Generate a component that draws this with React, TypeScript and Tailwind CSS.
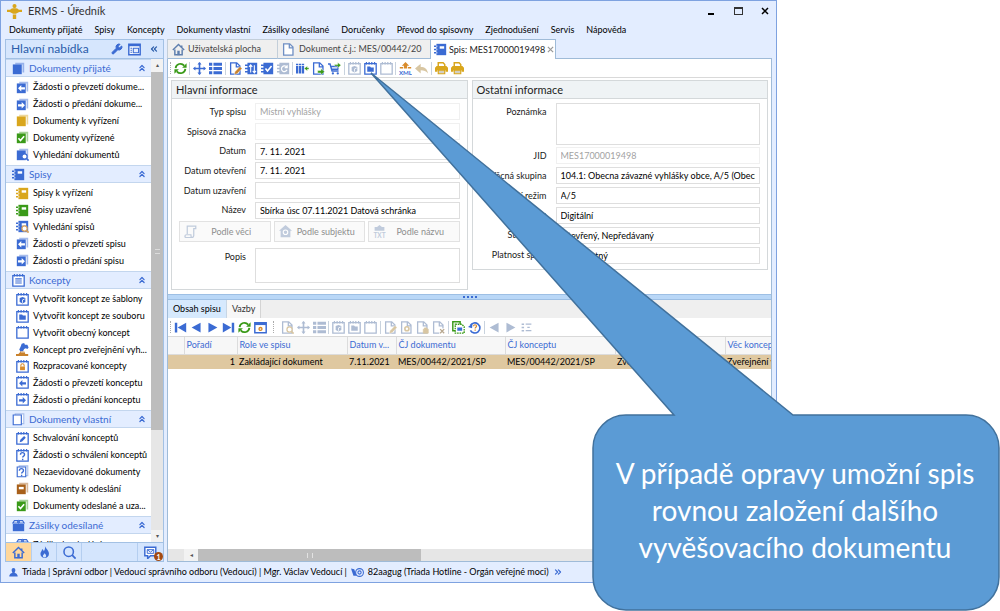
import React from 'react';
import { ChevronsLeft, ChevronsRight, ChevronsUp, Wrench } from 'lucide-react';

const BLUE = '#3b6bd3';
const LIGHT = '#a9c0ec';
const YELLOW = '#d9a61c';
const GREEN = '#3a9a18';
const BROWN = '#a8601a';
const MUTED = '#aebcd3';

type IconProps = { name: string; color?: string; size?: string };

// Sheet with a second one behind it
const stack = (c: string) => (
    <>
        <path d="M4 1h11v12h-2V3H4z" fill={c} opacity={0.45} />
        <path d="M1 3h11v12H1z" fill={c} />
    </>
);

const binder = (c: string) => (
    <>
        <path d="M3 1h12v14H3z" fill={c} />
        <path d="M0 3h4v2H0zM0 7h4v2H0zM0 11h4v2H0z" fill={c} />
        <path d="M3 3h1v2H3zM3 7h1v2H3zM3 11h1v2H3z" fill="#fff" />
        <path d="M7 4h5.500v3H7z" fill="#fff" />
    </>
);

const pad = (c: string) => (
    <>
        <path d="M1 2h14v13H1z" fill="#fff" stroke={c} strokeWidth={1.6} />
        <path d="M3 0v3M6.3 0v3M9.6 0v3M13 0v3" stroke={c} strokeWidth={1.5} />
    </>
);

const page = (c: string) => <path d="M2 1h7.500l4 4v10H2zM9 1.500V6h4.500" fill="#fff" stroke={c} strokeWidth={1.6} />;

const glass = (c: string) => (
    <>
        <circle cx={10.5} cy={10.5} r={3.2} fill="#fff" stroke={c} strokeWidth={1.5} />
        <path d="M13 13l2.5 2.5" stroke={c} strokeWidth={2} />
    </>
);

const left = (c: string) => <path d="M2.5 9l4-4v2.6H11v2.8H6.500V13z" fill={c} />;
const right = (c: string) => <path d="M11 9L7 5v2.600H2.500v2.800H7V13z" fill={c} />;
const question = (c: string) => (
    <path d="M5.500 7c0-3.300 5-3.300 5 0 0 1.800-2.300 1.700-2.300 3.500M8.200 12v1.700" fill="none" stroke={c} strokeWidth={1.7} />
);
const pencil = (c: string) => <path d="M6.500 15.500l.8-3.500L13.500 5.500l2.500 2.500-6 6.500z" fill={c} stroke="#fff" strokeWidth={0.5} />;
const spine = (c: string) => <path d="M3 1h12v14H3zM0 3h4v2H0zM0 7h4v2H0zM0 11h4v2H0z" fill={c} />;

function drawing(name: string, c: string): React.ReactNode {
    switch (name) {
        case 'docs-plain': return stack(c);
        case 'docs-left': return <>{stack(c)}{left('#fff')}</>;
        case 'docs-right': return <>{stack(c)}{right('#fff')}</>;
        case 'docs-check': return <>{stack(c)}<path d="M3 9l2.500 2.800L10 6.500" fill="none" stroke="#fff" strokeWidth={2} /></>;
        case 'docs-label': return <>{stack(c)}<path d="M3.500 6h6v3h-6z" fill="#fff" /></>;
        case 'docs-search': return <>{stack(c)}{glass(c)}</>;
        case 'docs-outline': return (
            <g fill="#fff" stroke={c} strokeWidth={1.4}>
                <path d="M4 1h10.500v12H4z" stroke={LIGHT} />
                <path d="M1.500 2.500h10v12h-10z" />
            </g>
        );
        case 'docs-question': return (
            <>
                <path d="M4 1h10.500v12H4z" fill="#fff" stroke={LIGHT} strokeWidth={1.4} />
                <path d="M1.500 2.500h10.500v12H1.500z" fill="#fff" stroke={c} strokeWidth={1.4} />
                <g transform="translate(-1.300 0)">{question(c)}</g>
            </>
        );
        case 'binder': return binder(c);
        case 'binder-search': return <>{binder(c)}{glass('#d9a35c')}</>;
        case 'binder-arrows': return <>{spine(c)}<path d="M7 13V4M5 6l2-2.500L9 6M11.500 4v9M9.500 11l2 2.500 2-2.500" fill="none" stroke="#fff" strokeWidth={1.3} /></>;
        case 'binder-check': return <>{spine(c)}<path d="M5.500 8l2.500 3 5-6" fill="none" stroke="#fff" strokeWidth={2} /></>;
        case 'binder-refresh': return <>{spine(c)}<path d="M12 6.500a3.500 3.500 0 1 0 .3 3M12.500 4v3h-3" fill="none" stroke="#fff" strokeWidth={1.5} /></>;
        case 'pad': return pad(c);
        case 'pad-lines': return <>{pad(c)}<path d="M4 6h8M4 8.500h8M4 11h8" stroke={c} strokeWidth={1.3} /></>;
        case 'pad-cube': return <>{pad(c)}<path d="M4.500 6L8 5l3.500 1v5L8 13l-3.500-2z" fill={c} /><path d="M8 12V8.500l2.500-1" fill="none" stroke="#fff" strokeWidth={1} /></>;
        case 'pad-folder': return <>{pad(c)}<path d="M4 5.500h3.500l1 1.200H12V12H4z" fill={c} /></>;
        case 'pad-lock': return <>{pad(c)}<path d="M5 8h6v4.500H5z" fill="#d98b2b" /><path d="M6 8V6.500a2 2 0 0 1 4 0V8" fill="none" stroke="#d98b2b" strokeWidth={1.3} /></>;
        case 'pad-left': return <>{pad(c)}<g transform="translate(1.300 0)">{left(c)}</g></>;
        case 'pad-right': return <>{pad(c)}<g transform="translate(1.300 0)">{right(c)}</g></>;
        case 'pad-pencil': return <>{pad(c)}<path d="M4.500 12.500l.8-3L10 5l2 2-4.500 4.700z" fill={c} /></>;
        case 'pad-question': return <>{pad(c)}{question(c)}</>;
        case 'stamp': return (
            <>
                <path d="M4 8l1.500-3L7 1l3-1 1 2 3 0 1.500 3.500-1.500 2-2-1-2 1-2 4H6z" fill={c} />
                <path d="M0 16v-2.500h3L6 10h4l1.500 3.500H15V16z" fill="#c9822d" />
                <path d="M6 11h4" stroke="#fff" />
            </>
        );
        case 'box': return (
            <>
                <path d="M1 6h14v9H1z" fill={c} />
                <path d="M3 2h4v3H1zM9 2h4l2 3H9z" fill="#fff" stroke={c} strokeWidth={1.3} />
                <path d="M8 1v5" stroke={c} />
            </>
        );
        case 'refresh': return (
            <>
                <path d="M2 7.500A5.900 5.900 0 0 1 12.500 4.500M14 8.500A5.900 5.900 0 0 1 3.500 11.500" fill="none" stroke={c} strokeWidth={2.2} />
                <path d="M15.500 1.500V7H10zM.5 14.500V9H6z" fill={c} />
            </>
        );
        case 'move': return <><path d="M8 1v14M1 8h14" stroke={c} strokeWidth={2} /><path d="M8 0l2.500 3h-5zM8 16l2.500-3h-5zM0 8l3-2.500v5zM16 8l-3-2.500v5z" fill={c} /></>;
        case 'list': return <path d="M0 1h4v3.500H0zM0 6.200h4v3.500H0zM0 11.500h4V15H0zM5.500 1H16v3.500H5.500zM5.500 6.200H16v3.500H5.500zM5.500 11.500H16V15H5.500z" fill={c} />;
        case 'small-list': return <path d="M2 3h3v2H2zM2 7h3v2H2zM2 11h3v2H2zM7 3h7v1.500H7zM9 7h3v1.500H9zM7 11h7v1.500H7z" fill={c} />;
        case 'page': return page(c);
        case 'page-pencil': return <>{page(c)}{pencil(c === MUTED ? '#d8c6a2' : '#c9822d')}</>;
        case 'page-arrow': return <>{page(c)}<path d="M7 10.500h4V8l4.500 4-4.500 4v-2.500H7z" fill={GREEN} stroke="#fff" strokeWidth={0.5} /></>;
        case 'page-search': return <>{page(c)}{glass('#d8c6a2')}</>;
        case 'page-gear': return <>{page(c)}<circle cx={8.500} cy={9.500} r={2.500} fill="none" stroke="#d8c6a2" strokeWidth={2} /></>;
        case 'page-lock': return <>{page(c)}<path d="M9 10h6v5H9zM10.500 10V8.500h3V10" fill="#d8c6a2" stroke="#d8c6a2" /></>;
        case 'page-x': return <>{page(c)}<path d="M9 9h7v7H9z" fill="#fff" /><path d="M10 10l5 5M15 10l-5 5" stroke="#b8a890" strokeWidth={1.6} /></>;
        case 'columns': return <><path d="M0 5h2.800v9H0zM3.600 5h2.800v9H3.600zM7.200 5H10v9H7.200zM0 2h2.800v2H0zM3.600 2h2.800v2H3.600zM7.200 2H10v2H7.200z" fill={c} /><path d="M16 7h-2V5l-4 3 4 3V9h2z" fill={GREEN} stroke="#fff" strokeWidth={0.5} /></>;
        case 'cart': return (
            <>
                <path d="M0 2.500h2.500L5 11h8M4 5.500h8.500L12 9H5" fill="none" stroke={c} strokeWidth={1.8} />
                <circle cx={6} cy={14} r={1.4} fill={c} /><circle cx={12} cy={14} r={1.4} fill={c} />
                <path d="M8 3h4V.5l4 3.500-4 3.500V5H8z" fill={GREEN} stroke="#fff" strokeWidth={0.5} />
            </>
        );
        case 'xml': return (
            <>
                <path d="M8 0l4.500 4.500H10V8H6V4.500H3.500zM1 6h4v2H1zM11 6h4v2h-4z" fill="#d98b2b" />
                <text x={8} y={15.500} textAnchor="middle" fontSize={7.500} fontWeight={700} fill={c}>XML</text>
            </>
        );
        case 'txt': return (
            <>
                <path d="M8 0l3 2.500h3V7H2V2.500h3zM4 4v2M8 4v2M12 4v2" fill={c} />
                <text x={8} y={15.500} textAnchor="middle" fontSize={8} fontWeight={700} fill={c}>TXT</text>
            </>
        );
        case 'back': return <path d="M0 8l7-6v4c5 0 8 2 9 8-2-3-5-4-9-4v4z" fill={c} />;
        case 'printer': return (
            <>
                <path d="M4 5V1h6l2 2v2" fill="#fff" stroke={c} strokeWidth={1.8} />
                <path d="M2 5h12l2 2v5h-3v-2H3v2H0V7z" fill={c} />
                <path d="M4 10h8v4.500H4z" fill="#d3cfc4" stroke={c} strokeWidth={1.4} />
            </>
        );
        case 'first': return <path d="M1 2h3v12H1zM15 2v12L4.500 8z" fill={c} />;
        case 'prev': return <path d="M13 2v12L2 8z" fill={c} />;
        case 'next': return <path d="M3 2v12l11-6z" fill={c} />;
        case 'last': return <path d="M12 2h3v12h-3zM1 2v12l10.500-6z" fill={c} />;
        case 'window-gear': return <><path d="M1 2h14v12.500H1z" fill="#fff" stroke={c} strokeWidth={1.8} /><path d="M1 2h14v3H1z" fill={c} /><circle cx={8} cy={9.800} r={1.8} fill="none" stroke="#d98b2b" strokeWidth={1.7} /></>;
        case 'copy-green': return <><path d="M1 1h9v11H1z" fill="#fff" stroke={c} strokeWidth={1.8} /><path d="M4 4h8l3 3v8H4z" fill="#fff" stroke={c} strokeWidth={1.6} strokeDasharray="2 1" /><path d="M6.500 8h6v4h-6z" fill={BLUE} /></>;
        case 'help-round': return (
            <>
                <path d="M3 5.500a6.200 6.200 0 1 1 0 6" fill="none" stroke={c} strokeWidth={2} />
                <path d="M0 7.500l5 1.500L5.500 3z" fill={c} />
                <path d="M6.800 6.500c0-2.500 3.700-2.500 3.700 0 0 1.300-1.700 1.300-1.700 2.700M8.800 10.500v1.500" fill="none" stroke="#d98b2b" strokeWidth={1.5} />
            </>
        );
        case 'house': return (
            <>
                <path d="M1 8.500L8 1.800l7 6.700M12 3v3" fill="none" stroke={c} strokeWidth={1.8} />
                <path d="M3.500 8v6.500h9V8" fill="none" stroke={c} strokeWidth={1.8} />
                <path d="M6.500 9.500h3V15h-3z" fill={c} />
            </>
        );
        case 'house-solid': return <><path d="M8 0l8 7h-2v8H2V7H0z" fill={c} /><circle cx={8} cy={9} r={2.8} fill="none" stroke="#fff" strokeWidth={1.3} /></>;
        case 'scroll': return <path d="M4 11V1.500h10.500V4.500H12V13c0 2-1.500 2.500-2.500 2.500H3c-2.500 0-2.500-3.500 0-3.500h5.500c0 2 1 3.500 1.500 3.500" fill="none" stroke={c} strokeWidth={1.5} />;
        case 'drop': return <><path d="M8.500 0c1 3 5 5.500 5 9.500a5.200 5.200 0 0 1-10.500 0C3 7 5 6.500 5 4c1.500.5 2 1.500 2 2.500C8.500 5 9 2.500 8.500 0z" fill={c} /><path d="M8 9c1.500 1.500 2 2 2 3.300a2 2 0 0 1-4 0C6 11 7.500 10.500 8 9z" fill="#d4e5fd" /></>;
        case 'magnifier': return <><circle cx={7} cy={7} r={5.8} fill="none" stroke={c} strokeWidth={1.9} /><path d="M11 11l4.500 4.500" stroke={c} strokeWidth={2.2} /></>;
        case 'mail': return <><path d="M1 1.500h13.500V12H8l-3.500 3.500V12H1z" fill="#fff" stroke={c} strokeWidth={1.8} /><path d="M4 4.500h8v4.500H4zM4 4.500l4 3 4-3" fill="none" stroke={c} strokeWidth={1.2} /></>;
        case 'panel': return <><path d="M1 1.500h14v13H1z" fill="#fff" stroke={c} strokeWidth={1.8} /><path d="M1 1.500h14V4H1z" fill={c} /><path d="M3 6.500h2M3 9h2M3 11.500h2" stroke={c} strokeWidth={1.3} /><path d="M6.500 6.500H13v5.500H6.500z" fill="#e3edff" stroke={c} strokeWidth={1.3} /></>;
        case 'person': return <path d="M8 0c2 0 3.300 1.500 3.300 3.800 0 2-1 3-1.300 3.700 0 2 5.500 2 5.500 7.500H.5C.5 9.500 6 9.500 6 7.500c-.3-.7-1.300-1.700-1.300-3.700C4.700 1.500 6 0 8 0z" fill={c} />;
        case 'post': return <><path d="M0 3l4 1 3 8-4 0z" fill={c} /><circle cx={10.500} cy={8} r={4.8} fill="none" stroke={c} strokeWidth={1.3} /><circle cx={10.500} cy={8} r={2} fill="none" stroke={c} strokeWidth={1.3} /></>;
        case 'emblem': return (
            <>
                <circle cx={8} cy={2.200} r={2.200} fill={c} />
                <path d="M3.500 6C4.500 4 11.500 4 12.500 6H16v2.500h-3L9.500 10.500h-3L3 8.500H0V6zM6.200 11.300h3.600V16H6.200z" fill={c} />
            </>
        );
        default: return null;
    }
}

const Icon = ({ name, color = BLUE, size = 'size-[13px]' }: IconProps) => (
    <svg viewBox="0 0 16 16" className={`${size} shrink-0`} aria-hidden="true">
        {drawing(name, color)}
    </svg>
);

const MENU = ['Dokumenty přijaté', 'Spisy', 'Koncepty', 'Dokumenty vlastní', 'Zásilky odesílané', 'Doručenky', 'Převod do spisovny', 'Zjednodušení', 'Servis', 'Nápověda'];

interface NavGroup {
    title: string;
    icon: string;
    height: string;
    items: [string, string, string?][];
}

const GROUPS: NavGroup[] = [
    {
        title: 'Dokumenty přijaté', icon: 'docs-plain', height: 'h-[88px]',
        items: [
            ['docs-left', 'Žádosti o převzetí dokume...'],
            ['docs-right', 'Žádosti o předání dokume...'],
            ['docs-plain', 'Dokumenty k vyřízení', YELLOW],
            ['docs-check', 'Dokumenty vyřízené', GREEN],
            ['docs-search', 'Vyhledání dokumentů'],
        ],
    },
    {
        title: 'Spisy', icon: 'binder', height: 'h-[88px]',
        items: [
            ['binder', 'Spisy k vyřízení', YELLOW],
            ['binder', 'Spisy uzavřené', GREEN],
            ['binder-search', 'Vyhledání spisů'],
            ['docs-left', 'Žádosti o převzetí spisu'],
            ['docs-right', 'Žádosti o předání spisu'],
        ],
    },
    {
        title: 'Koncepty', icon: 'pad-lines', height: 'h-[121px]',
        items: [
            ['pad-cube', 'Vytvořit koncept ze šablony'],
            ['pad-folder', 'Vytvořit koncept ze souboru'],
            ['pad', 'Vytvořit obecný koncept'],
            ['stamp', 'Koncept pro zveřejnění vyh...'],
            ['pad-lock', 'Rozpracované koncepty'],
            ['pad-left', 'Žádosti o převzetí konceptu'],
            ['pad-right', 'Žádosti o předání konceptu'],
        ],
    },
    {
        title: 'Dokumenty vlastní', icon: 'docs-outline', height: 'h-[88px]',
        items: [
            ['pad-pencil', 'Schvalování konceptů'],
            ['pad-question', 'Žádosti o schválení konceptů'],
            ['docs-question', 'Nezaevidované dokumenty'],
            ['docs-label', 'Dokumenty k odeslání', BROWN],
            ['docs-check', 'Dokumenty odeslané a uza...', GREEN],
        ],
    },
    { title: 'Zásilky odesílané', icon: 'box', height: 'h-[21px]', items: [['box', 'Zásilky k odeslání']] },
];

const Sidebar = () => (
    <aside className="flex w-[159px] shrink-0 flex-col border border-[#a3c1e4] bg-white">
        <div className="flex h-[19px] shrink-0 items-center gap-[5px] border-b border-[#a3c1e4] bg-[#d6e6fd] pr-1 pl-[5px] text-[#2a5caa]">
            <h2 className="flex-1 text-[12px]">Hlavní nabídka</h2>
            <button aria-label="Nastavení"><Wrench className="size-3 fill-current text-[#3b6bd3]" /></button>
            <button aria-label="Rozvržení"><Icon name="panel" /></button>
            <button aria-label="Sbalit panel" className="pl-[3px]"><ChevronsLeft className="size-2.5" strokeWidth={3} /></button>
        </div>
        <div className="flex min-h-0 flex-1">
            <nav className="min-w-0 flex-1 overflow-hidden">
                {GROUPS.map((group) => (
                    <section key={group.title}>
                        <button className="flex h-[18px] w-full items-center gap-1 border-y border-[#c3d6ee] bg-[#e3edff] pr-1 pl-[6px] text-left text-[10px] text-[#3b6bd3]">
                            <Icon name={group.icon} />
                            <span className="flex-1">{group.title}</span>
                            <ChevronsUp className="size-2.5" strokeWidth={3} />
                        </button>
                        <ul className={`flex flex-col py-[2px] ${group.height}`}>
                            {group.items.map(([icon, label, color]) => (
                                <li key={label} className="flex flex-1">
                                    <button className="flex items-center gap-1 pl-[10px] whitespace-nowrap text-black">
                                        <Icon name={icon} color={color} />
                                        {label}
                                    </button>
                                </li>
                            ))}
                        </ul>
                    </section>
                ))}
            </nav>
            <div className="flex w-[12px] shrink-0 flex-col items-center bg-[#e6e6e6] text-[6px] leading-[12px] text-[#555]">
                <span className="h-[13px] w-full bg-[#f2f2f2] text-center">▴</span>
                <div className="flex w-full flex-[358] items-center justify-center bg-[#bdbdbd]">
                    <span className="h-[5px] w-[5px] border-y border-[#dcdcdc]" />
                </div>
                <div className="flex-[100]" />
                <span className="h-[12px] w-full bg-[#f2f2f2] text-center">▾</span>
            </div>
        </div>
        <div className="flex h-[19px] shrink-0 border-t border-[#a3c1e4] bg-[#d4e5fd]">
            <button aria-label="Domů" className="flex w-[25px] items-center justify-center bg-[#ffd79b]"><Icon name="house" /></button>
            <button aria-label="Aktuální" className="flex w-[26px] items-center justify-center border-x border-[#b4cef0]"><Icon name="drop" /></button>
            <button aria-label="Hledat" className="flex w-[25px] items-center justify-center border-r border-[#b4cef0]"><Icon name="magnifier" /></button>
            <span className="flex-1" />
            <button aria-label="Zprávy" className="relative flex w-[26px] items-center justify-center border-l border-[#b4cef0]">
                <Icon name="mail" />
                <span className="absolute right-0 bottom-0 flex size-[9px] items-center justify-center rounded-full bg-[#a34a12] text-[7px] font-bold text-white">1</span>
            </button>
        </div>
    </aside>
);

// '|' is a separator, ':' a grip
const MAIN_TOOLS: [string, string?][] = [
    ['refresh', GREEN], ['|'], ['move'], ['list'], ['|'], ['page-pencil'], ['binder-arrows'], ['binder-check'], ['binder-refresh', MUTED], ['|'],
    ['columns'], ['page-arrow'], ['cart'], ['|'], ['pad-cube', MUTED], ['pad-folder'], ['pad', MUTED], ['|'], ['xml'], ['back', '#d8c6a2'], ['|'],
    ['printer', YELLOW], ['printer', YELLOW],
];

const GRID_TOOLS: [string, string?][] = [
    ['first'], ['prev'], ['next'], ['last'], ['refresh', GREEN], ['window-gear'], [':'],
    ['page-search', MUTED], ['move', MUTED], ['list', MUTED], ['|'], ['pad-cube', MUTED], ['pad-folder', MUTED], ['pad', MUTED], ['|'],
    ['page-pencil', MUTED], ['page-gear', MUTED], ['page-lock', MUTED], ['page-x', MUTED], ['|'], ['copy-green', GREEN], ['help-round'], ['|'],
    ['prev', MUTED], ['next', MUTED], ['small-list', MUTED],
];

const Toolbar = ({ tools, width }: { tools: [string, string?][]; width: string }) => (
    <div className="flex h-[19px] shrink-0 items-center border-b border-[#d9d9d9] bg-white pl-[2px]">
        <span className="h-[12px] w-[2px] border-l border-dotted border-[#aaa]" />
        <div className={`flex items-center ${width}`}>
            {tools.map(([name, color], i) => {
                if (name === '|') return <span key={i} className="flex flex-1 justify-center"><i className="h-[13px] w-px bg-[#c9d3de]" /></span>;
                if (name === ':') return <span key={i} className="flex w-[11px] justify-center"><i className="h-[12px] border-l border-dotted border-[#aaa]" /></span>;
                return (
                    <button key={i} aria-label={name} className="flex w-4 shrink-0 justify-center">
                        <Icon name={name} color={color} />
                    </button>
                );
            })}
        </div>
    </div>
);

const Field = ({ id, label, value = '', disabled = false }: { id: string; label: string; value?: string; disabled?: boolean }) => (
    <div className="flex flex-1 items-center gap-[9px]">
        <label htmlFor={id} className="w-[74px] shrink-0 text-right whitespace-nowrap">{label}</label>
        <input
            id={id}
            defaultValue={value}
            disabled={disabled}
            className={`h-[17px] min-w-0 flex-1 border px-1 ${disabled ? 'border-[#f0f0f0] text-[#a3a3a3]' : 'border-[#dedede] text-black'}`}
        />
    </div>
);

const Area = ({ id, label, height }: { id: string; label: string; height: string }) => (
    <div className="flex gap-[9px]">
        <label htmlFor={id} className="w-[74px] shrink-0 pt-[3px] text-right">{label}</label>
        <textarea id={id} className={`min-w-0 flex-1 resize-none border border-[#dedede] ${height}`} />
    </div>
);

const Panel = ({ title, children }: { title: string; children: React.ReactNode }) => (
    <section className="min-w-0 flex-1 border border-[#d4d8da]">
        <h3 className="flex h-[18px] items-center border-b border-[#d4d8da] bg-[#eff3f5] px-1 text-[11px] text-[#222]">{title}</h3>
        <div className="pr-[7px]">{children}</div>
    </section>
);

const Form = () => (
    <div className="flex shrink-0 items-start gap-[4px] px-[3px] pt-[2px] pb-[4px]">
        <Panel title="Hlavní informace">
            <div className="mt-[3px] flex h-[118px] flex-col">
                <Field id="typ" label="Typ spisu" value="Místní vyhlášky" disabled />
                <Field id="znacka" label="Spisová značka" disabled />
                <Field id="datum" label="Datum" value="7. 11. 2021" />
                <Field id="otevreni" label="Datum otevření" value="7. 11. 2021" />
                <Field id="uzavreni" label="Datum uzavření" />
                <Field id="nazev" label="Název" value="Sbírka úsc 07.11.2021 Datová schránka" />
            </div>
            <div className="mt-[1px] grid grid-cols-3 gap-[3px] pl-[7px] text-[#8e8e8e]">
                {[['scroll', 'Podle věci'], ['house-solid', 'Podle subjektu'], ['txt', 'Podle názvu']].map(([icon, label]) => (
                    <button key={label} className="flex h-[21px] items-center border border-[#e2e2e2] bg-[#fafafa] px-1">
                        <Icon name={icon} color="#c0cbdc" />
                        <span className="flex-1 text-center">{label}</span>
                    </button>
                ))}
            </div>
            <div className="pt-[6px] pb-[6px]">
                <Area id="popis" label="Popis" height="h-[35px]" />
            </div>
        </Panel>
        <Panel title="Ostatní informace">
            <div className="pt-[4px]">
                <Area id="poznamka" label="Poznámka" height="h-[42px]" />
            </div>
            <div className="mt-[1px] mb-[4px] flex h-[119px] flex-col">
                <Field id="jid" label="JID" value="MES17000019498" disabled />
                <Field id="skupina" label="Věcná skupina" value="104.1: Obecna závazné vyhlášky obce, A/5 (Obecně)" />
                <Field id="rezim" label="Skartační režim" value="A/5" />
                <Field id="forma" label="Forma" value="Digitální" />
                <Field id="stav" label="Stav spisu" value="Otevřený, Nepředávaný" />
                <Field id="platnost" label="Platnost spisu" value="     Neplatný" />
            </div>
        </Panel>
    </div>
);

const COLUMNS: [string, string, string][] = [
    ['', '', 'w-[16px]'],
    ['Pořadí', '1', 'w-[53px]'],
    ['Role ve spisu', 'Zakládající dokument', 'w-[110px]'],
    ['Datum v...', '7.11.2021', 'w-[49px]'],
    ['ČJ dokumentu', 'MES/00442/2021/SP', 'w-[109px]'],
    ['ČJ konceptu', 'MES/00442/2021/SP', 'w-[110px]'],
    ['Věc dokumentu', 'Zveřejnění vyhlášky', 'w-[110px]'],
    ['Věc konceptu', 'Zveřejnění vyhlášky', 'w-[110px]'],
];

const Contents = () => (
    <div className="flex min-h-0 flex-1 flex-col">
        <div className="flex h-[6px] shrink-0 items-center justify-center border-y border-[#9dbfe4] bg-[#b9d7f7]">
            <span className="w-[14px] border-t-2 border-dotted border-[#3b6bd3]" />
        </div>
        <div className="flex h-[18px] shrink-0 bg-[#efefef]">
            <button className="border-r border-[#c8d6e4] bg-[#d6e9fd] px-[5px] text-black">Obsah spisu</button>
            <button className="border-r border-[#d4d4d4] bg-[#f7f7f7] px-[5px] text-[#333]">Vazby</button>
        </div>
        <Toolbar tools={GRID_TOOLS} width="w-[362px]" />
        <div className="min-h-0 flex-1 overflow-hidden">
            <table className="w-[667px] table-fixed border-collapse whitespace-nowrap">
                <thead>
                    <tr className="h-[17px] bg-[#f7f7f7] text-left text-[#3b6bd3]">
                        {COLUMNS.map(([title, , width], i) => (
                            <th key={i} className={`border-r border-b border-[#dcdcdc] px-[2px] font-normal ${width}`}>{title}</th>
                        ))}
                    </tr>
                </thead>
                <tbody>
                    <tr className="h-[15px] bg-[#dfc8a0] text-black">
                        {COLUMNS.map(([, value], i) => (
                            <td key={i} className={`overflow-hidden px-[2px] ${i === 1 ? 'text-right' : ''}`}>{value}</td>
                        ))}
                    </tr>
                </tbody>
            </table>
        </div>
        <div className="flex h-[12px] shrink-0 bg-[#e6e6e6] pl-[16px] text-[6px] text-[#555]">
            <span className="w-[14px] bg-[#f2f2f2] text-center leading-[12px]">◂</span>
            <div className="flex w-[38%] items-center justify-center bg-[#bdbdbd]">
                <span className="h-[5px] w-[6px] border-x border-[#e2e2e2]" />
            </div>
        </div>
    </div>
);

const Workspace = () => (
    <main className="flex min-w-0 flex-1 flex-col">
        <div className="flex h-[20px] shrink-0">
            <button className="flex w-[111px] items-center gap-[3px] border border-[#c3ced9] border-b-[#9fbbd8] bg-[#efefef] px-1 text-[#444]">
                <Icon name="house" color="#5f7fae" />Uživatelská plocha
            </button>
            <button className="flex w-[152px] items-center gap-[4px] border-y border-[#c3ced9] border-b-[#9fbbd8] bg-[#efefef] px-1 text-[#444]">
                <Icon name="page" color="#6f8fc4" />Dokument č.j.: MES/00442/20
            </button>
            <button className="flex w-[126px] items-center gap-[2px] border border-b-0 border-[#9fbbd8] bg-white px-[3px] whitespace-nowrap text-[#222]">
                <Icon name="binder" />
                <span className="flex-1 text-left">Spis: MES17000019498</span>
                <svg viewBox="0 0 8 8" className="size-[7px] shrink-0" aria-hidden="true"><path d="M1 1l6 6M7 1L1 7" stroke="#999" strokeWidth={1.4} /></svg>
            </button>
            <span className="flex-1 border-b border-[#9fbbd8]" />
        </div>
        <div className="flex min-h-0 flex-1 flex-col border border-t-0 border-[#9fbbd8] bg-white">
            <Toolbar tools={MAIN_TOOLS} width="w-[293px]" />
            <Form />
            <Contents />
        </div>
    </main>
);

const Callout = () => (
    <div className="pointer-events-none absolute inset-0">
        <svg viewBox="0 0 1000 611" preserveAspectRatio="none" className="absolute inset-0 h-full w-full" aria-hidden="true">
            <path
                d="M371 73L674 415H626A33 33 0 0 0 593 448V577A33 33 0 0 0 626 610H966A33 33 0 0 0 999 577V448A33 33 0 0 0 966 415H793Z"
                fill="#5b9bd5"
                stroke="#41719c"
                strokeWidth={1.5}
            />
        </svg>
        <p className="absolute right-0 bottom-0 flex h-[33%] w-[41%] items-center justify-center text-center text-[28px] leading-[37px] whitespace-nowrap text-white">
            V případě opravy umožní spis
            <br />
            rovnou založení dalšího
            <br />
            vyvěšovacího dokumentu
        </p>
    </div>
);

export default function App() {
    return (
        <div className="relative flex h-screen flex-col overflow-hidden bg-white pb-7 font-['Lato',sans-serif] text-[9px] leading-[12px] text-[#1a1a1a] [font-variant-ligatures:none]">
            <div className="flex min-h-0 w-[77.7%] flex-1 flex-col border border-[#7ea2e0] bg-[#e3edff]">
                <header className="flex h-[20px] shrink-0 items-center gap-[6px] pr-[5px] pl-[6px]">
                    <Icon name="emblem" color={YELLOW} size="size-[15px]" />
                    <h1 className="flex-1 text-[11px] text-[#333]">ERMS - Úředník</h1>
                    <div className="flex gap-[15px] text-black">
                        <button aria-label="Minimalizovat" className="flex size-[12px] items-end justify-center pb-[2px]"><i className="h-[2px] w-[6px] bg-black" /></button>
                        <button aria-label="Maximalizovat" className="flex size-[12px] items-center justify-center"><i className="h-[8px] w-[9px] border border-t-2 border-[#333]" /></button>
                        <button aria-label="Zavřít" className="flex size-[12px] items-center justify-center">
                            <svg viewBox="0 0 8 8" className="size-2"><path d="M1 1l6 6M7 1L1 7" stroke="#000" strokeWidth={1.5} /></svg>
                        </button>
                    </div>
                </header>
                <nav className="flex h-[18px] shrink-0 items-center gap-[12px] pl-[8px] whitespace-nowrap text-black">
                    {MENU.map((item) => <button key={item}>{item}</button>)}
                </nav>
                <div className="flex min-h-0 flex-1 gap-[3px] px-[4px]">
                    <Sidebar />
                    <Workspace />
                </div>
                <footer className="flex h-[20px] shrink-0 items-center gap-[4px] pl-[8px] whitespace-nowrap text-black">
                    <Icon name="person" size="size-[9px]" />
                    <span>Triada | Správní odbor | Vedoucí správního odboru (Vedouci) | Mgr. Václav Vedoucí |</span>
                    <Icon name="post" size="size-[13px]" />
                    <span>82aagug (Triada Hotline - Orgán veřejné moci)</span>
                    <ChevronsRight className="size-2.5 text-[#3b6bd3]" strokeWidth={3} />
                </footer>
            </div>
            <Callout />
        </div>
    );
}
